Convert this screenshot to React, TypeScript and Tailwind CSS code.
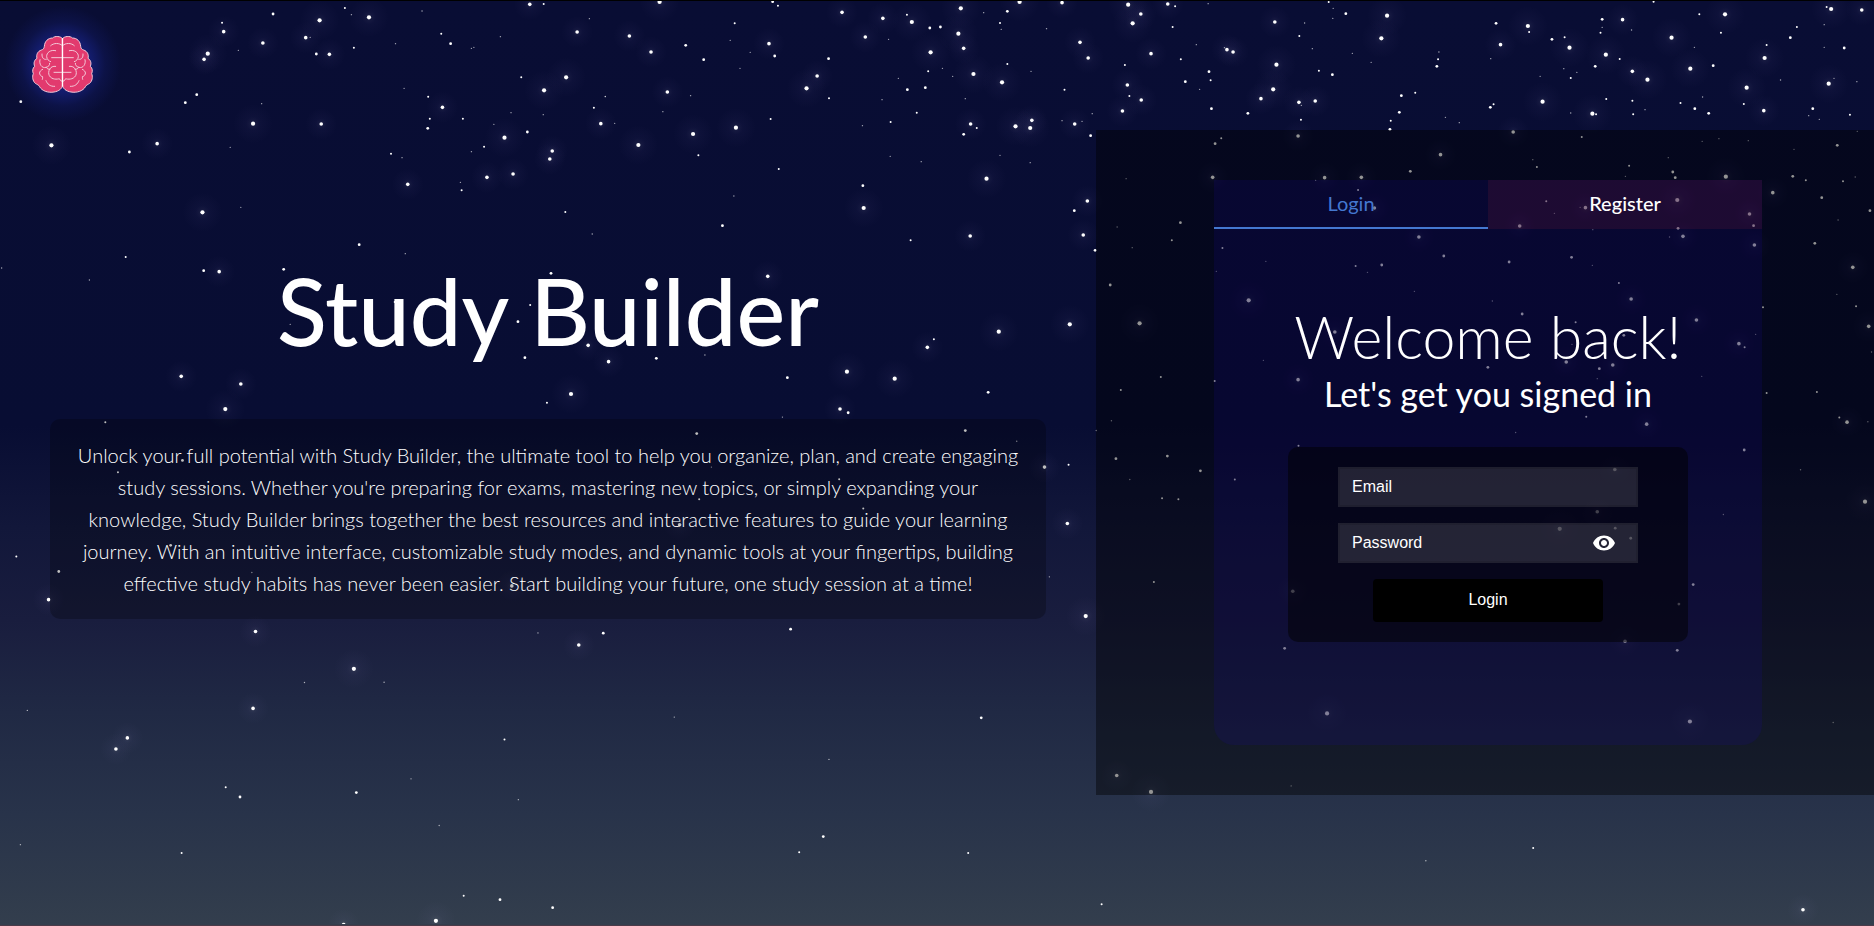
import { useState } from "react";
import { MdVisibility, MdVisibilityOff } from "react-icons/md";

/*
 * Star chart. The sky is split in six sectors; each has an origin in sky
 * units, the scale of its own grid, and a list of "x y magnitude" entries.
 * Magnitudes run from 1 (faint speck) to 5 (bright star with a halo).
 */
type Sector = { ox: number; oy: number; sx: number; sy: number; stars: string };

const SECTORS: Sector[] = [
  {
    ox: 0, oy: 0, sx: 2.45, sy: 3,
    stars:
      "669 42 3,783 61 5,845 24 2,861 44 1,904 52 5,544 68 2,548 95 4,644 129 4,749 113 4,760 112 1,867 143 2,775 162 3,807 163 4,584 151 1,509 161 5,500 178 4,482 284 3,454 308 3,641 311 1,51 305 3,620 371 5,787 372 4,126 436 5,385 431 4,317 456 3,564 442 1,496 637 5,590 622 1,880 734 3,993 761 1,308 771 2,499 812 3,537 815 4,695 808 3,4 804 1,219 840 1,444 1129 4,590 1152 4,1034 33 1,1081 101 2,1104 131 3,1155 145 1,1161 142 1,969 131 1,1226 110 1,1298 13 4,1332 12 2,1444 56 1,1414 96 4,1277 232 2,1387 232 5,1333 271 5,990 265 1,1049 290 2,1084 322 4,1053 356 2,1134 356 2,1048 385 3,1252 338 1,1331 344 1,1210 373 1,1236 413 5,1292 396 3,1186 440 2,1155 455 1,958 461 2,985 473 1,999 553 4,1128 547 1,1131 571 2,1193 532 4,1257 522 4,1353 453 4,1347 477 4,1455 323 2,1483 290 1,1385 636 2,1451 702 1,1350 820 3,967 906 2,1299 915 2,1269 965 3,711 973 1,1441 1036 4,1286 1073 3,1171 1069 1,1399 1182 5",
  },
  {
    ox: 600, oy: 0, sx: 2.45, sy: 3,
    stars:
      "146 6 5,423 5 3,436 17 2,330 70 2,72 108 4,125 156 4,210 136 3,254 179 3,319 121 1,368 157 1,343 205 1,414 131 4,428 168 3,593 37 4,560 176 3,532 228 4,506 265 5,561 295 2,165 276 4,222 287 1,13 289 1,154 335 1,2 371 4,36 370 1,333 383 5,228 402 5,94 435 5,418 357 2,241 466 2,438 507 2,328 588 1,300 677 3,411 829 4,644 557 3,646 624 5,761 721 2,907 708 4,947 536 5,787 485 1,711 469 1,643 377 1,712 366 2,776 338 2,691 299 1,753 269 3,797 263 3,731 235 1,804 214 2,839 205 1,810 157 5,864 229 1,895 296 1,915 222 5,985 247 5,891 145 4,878 101 5,834 81 3,808 84 3,764 66 5,752 44 2,693 55 4,650 111 4,707 118 1,884 25 5,940 38 1,998 34 3,1028 6 5,1132 8 4,980 69 2,983 88 1,1094 86 1,998 192 2,1056 214 1,1176 127 4,1196 174 4,1138 269 2,1018 379 5,1058 361 4,1054 384 5,1132 362 1,1163 372 4,1181 364 1,1206 341 1,1202 407 3,908 372 4,923 384 2,891 403 3,980 466 1,1054 488 1,1294 14 5,1325 42 4,1305 70 5,1391 12 4,1409 19 2,1490 11 1,1403 81 2,1350 161 4,1423 178 2,1461 134 1,1286 195 2,1292 255 4,1297 288 2,1326 300 4,1280 333 4,1434 245 3,1492 215 3,1496 241 2,1469 268 1,1498 326 3,1536 149 4,1530 143 1,1551 156 4,1194 603 4,1162 632 3,1184 705 4,1213 751 3,977 995 5,1151 973 5,818 1018 2,802 1042 4,605 1115 5,722 1136 5,459 1133 3,138 1075 3,21 1085 4,257 1065 1,951 1177 3,1522 415 2,1507 431 3,1501 532 4,1289 536 1,1422 668 3,1267 681 1,1401 721 2,1304 743 1,1525 744 2,1510 814 1,1250 855 3,1322 970 5,1374 1131 2,1276 1170 2,1506 1143 2",
  },
  {
    ox: 1234, oy: 0, sx: 2.45, sy: 3,
    stars:
      "232 6 2,274 41 3,243 25 1,242 55 1,100 66 4,173 69 1,375 47 5,160 108 2,361 115 5,192 146 1,290 160 1,502 156 1,500 178 2,497 199 3,104 194 5,208 212 2,241 224 3,336 187 1,96 268 5,66 296 4,159 307 4,165 316 1,199 303 4,34 340 3,164 359 2,410 287 3,444 278 2,405 337 3,384 362 2,382 388 3,518 352 1,552 368 1,628 322 3,636 313 2,642 70 3,720 78 5,723 96 2,653 134 4,629 176 1,779 118 3,810 112 2,822 143 5,808 206 1,750 229 1,840 217 1,825 234 2,756 305 5,825 339 1,878 341 5,887 343 2,902 58 3,952 59 4,902 82 1,898 98 2,974 90 1,911 164 5,945 177 2,885 199 3,976 214 4,1013 239 5,912 297 2,976 302 2,978 343 2,1007 329 1,1028 5 2,1072 113 5,1128 142 1,1140 43 2,1203 43 5,1193 98 2,1118 206 5,1174 197 3,1148 291 1,1094 309 2,1129 326 3,1163 340 3,1256 263 5,1249 312 2,1298 332 4,1300 174 5,1305 135 2,1363 113 3,1379 81 2,1339 240 1,1446 74 1,1452 21 2,1463 27 5,1538 30 4,1495 144 3,1457 251 5,1470 235 1,1446 142 1,1526 245 1,1418 326 3,1408 347 1,1434 358 1,1509 344 2,157 408 4,684 396 4,852 411 2,506 464 4,432 514 3,222 533 4,312 532 4,200 541 1,304 570 2,732 479 1,742 501 2,968 497 2,959 529 1,1064 473 1,1075 516 3,1081 533 3,1147 424 1,1188 416 1,1260 422 1,1205 530 5,1372 448 1,1478 436 3,1527 394 1,1369 529 3,1401 541 2,1492 544 2,1522 531 1,1320 578 4,1440 593 3,1558 632 3,1423 730 3,1480 660 1,1086 600 5,765 604 2,861 623 4,848 622 1,785 640 1,700 678 4,879 689 1,1088 685 3,1067 711 1,1100 709 4,1263 642 4,1273 677 3,1275 735 4,344 624 4,453 711 4,514 768 3,362 795 3,298 798 2,327 817 1,78 784 1,674 786 3,827 772 3,878 796 1,943 849 2,973 897 4,442 874 1,633 903 1,36 901 5,706 942 3,837 967 2,560 1006 2,247 996 4,828 1033 1,955 1006 3,1133 960 4,1278 1003 1,1237 1031 4,1251 1042 2,1296 922 2,814 1086 4,928 1095 4,895 1106 3,890 1136 1,622 1102 3,1146 1129 1,157 1139 4,72 1081 1,1516 802 4,1477 883 1,1524 919 2,1555 979 4,1562 1056 1,1305 1179 2,1428 1176 2",
  },
  {
    ox: 0, oy: 400, sx: 2.45, sy: 2.98,
    stars:
      "552 27 5,1340 8 2,258 66 2,447 180 3,289 215 2,1031 150 2,1300 175 2,501 260 3,418 433 3,40 466 2,144 511 3,119 595 4,617 514 1,1254 554 4,626 690 4,1318 694 1,1418 730 4,867 801 5,746 842 1,941 841 1,620 919 4,67 925 1,312 1007 4,284 1040 4,1236 1012 2,553 1154 2,588 1183 3,873 1170 3,1007 1129 1,1270 1191 1,1076 1268 1,50 1325 1,445 1350 2,1136 1477 2,1225 1489 3,1354 1513 3,1068 1552 5,842 1563 4",
  },
  {
    ox: 600, oy: 400, sx: 2.45, sy: 2.98,
    stars:
      "588 27 4,608 38 3,447 51 1,237 100 3,895 91 3,1021 123 1,273 200 1,243 296 2,195 372 4,586 236 2,762 268 3,645 323 2,1089 200 4,1148 193 2,1145 368 4,1101 527 1,1190 644 5,467 683 3,8 695 3,182 945 1,934 947 3,561 1071 1,547 1301 3,488 1348 2,902 1350 2,1229 1503 2,1216 91 1,1253 62 1,1264 175 3,1390 167 3,1471 211 3,1298 237 1,1377 293 2,1417 296 2,1357 542 2,1266 1119 4,1350 1168 5",
  },
  {
    ox: 1234, oy: 400, sx: 2.45, sy: 2.98,
    stars:
      "863 50 2,1011 72 4,690 97 1,158 136 2,1483 52 2,1502 66 4,1553 65 1,1250 149 3,1388 208 1,1199 341 1,1546 303 5,933 207 4,890 333 4,798 384 5,934 382 3,972 412 3,2 237 2,1125 550 3,1090 608 3,144 570 4,958 719 4,1086 746 3,124 740 3,228 934 5,1117 958 5,1468 961 1,140 1150 1,733 1335 2,470 1373 1,1394 1519 4",
  },
];

const RADIUS = [0, 0.7, 1, 1.4, 1.8, 2.1];

function Sky() {
  return (
    <svg
      aria-hidden="true"
      viewBox="0 0 1874 926"
      preserveAspectRatio="xMidYMin slice"
      className="absolute inset-x-0 -top-px h-full w-full"
    >
      <defs>
        <radialGradient id="halo">
          <stop offset="0" stopColor="#ffffff" stopOpacity="0.08" />
          <stop offset="0.35" stopColor="#b9a5ff" stopOpacity="0.03" />
          <stop offset="1" stopColor="#b9a5ff" stopOpacity="0" />
        </radialGradient>
      </defs>
      {SECTORS.flatMap((s, i) =>
        s.stars.split(",").map((entry, j) => {
          const [px, py, mag] = entry.split(" ").map(Number);
          const x = s.ox + px / s.sx;
          const y = s.oy + py / s.sy;
          return (
            <g key={`${i}-${j}`}>
              {mag > 3 && <circle cx={x} cy={y} r={mag * 4} fill="url(#halo)" />}
              <circle cx={x} cy={y} r={RADIUS[mag]} fill="#fff" opacity={mag === 1 ? 0.65 : 1} />
            </g>
          );
        }),
      )}
    </svg>
  );
}

function BrainHalf() {
  return (
    <g>
      <path
        fill="#e23a6e"
        d="M127.500 44C123 36 104 35 98 42C84 42 74 52 73 67C72 74 70 76 64 78C53 82 48 92 51 103C43 108 40 117 44 127C37 133 37 142 40 149C36 158 38 171 46 178C52 182 56 183 58 187C66 202 86 207 102 204C117 202 127 193 127.500 184Z"
      />
      <path d="M92 65C101 56 119 56 127 65M107 80C92 76 79 86 80 98C81 106 86 111 92 113M95 101H127M66 90C65 100 70 108 79 106M60 107C56 120 66 134 78 130C86 128 90 123 89 118M107 127C90 124 82 143 88 155C96 168 112 166 118 164L122 170L127 172M102 145H127M78 130C81 134 86 137 90 136M68 136C56 141 55 153 67 158M67 166C68 163 69 161 67 158M78 170C82 180 90 188 104 187" />
    </g>
  );
}

function Logo() {
  return (
    <a
      href="/"
      aria-label="Study Builder home"
      className="flex w-[126px] justify-center bg-[radial-gradient(circle_at_50%_50%,#17237c_0,#131c6c_28px,rgba(15,22,84,0.6)_42px,rgba(8,12,51,0)_58px)] py-[23px]"
    >
      <svg
        viewBox="0 0 258 240"
        className="h-20 w-[86px]"
        fill="none"
        stroke="#f3c9d8"
        strokeWidth="3"
        strokeLinecap="round"
        strokeLinejoin="round"
      >
        <BrainHalf />
        <g transform="translate(255 0) scale(-1 1)">
          <BrainHalf />
        </g>
        <path d="M127.500 44V186" stroke="#fff" strokeWidth="4" />
      </svg>
    </a>
  );
}

const fieldClass =
  "h-10 w-full border-2 border-black/10 bg-white/12 px-3 font-['Liberation_Sans',Arial,sans-serif] text-base text-white placeholder:text-white placeholder:opacity-100 focus:outline-none";

export default function App() {
  const [tab, setTab] = useState<"login" | "register">("login");
  const [show, setShow] = useState(false);
  const tabClass = (on: boolean) =>
    on
      ? "border-b-2 border-[#4478d0] text-[#4478d0]"
      : "border-b-2 border-transparent bg-[rgb(160,40,60)]/15 bg-clip-border font-medium text-white";

  return (
    <div className="relative flex min-h-screen flex-col overflow-hidden border-t border-b border-t-black border-b-[#4b3a48] bg-[linear-gradient(#090d34_0%,#080d33_46%,#12173a_57%,#191d3e_67%,#202944_77%,#28334a_88%,#333e4d_100%)] font-['Lato','Open_Sans',sans-serif] text-white">
      <Sky />
      <header className="absolute top-0 left-0">
        <Logo />
      </header>

      <main className="relative grid flex-1 grid-cols-[1096fr_778fr] items-center pb-0.5">
        <section className="px-[50px] pb-[60px] text-center">
          <h1 className="mb-[50px] pt-2 text-[92px] leading-[116px] font-medium">Study Builder</h1>
          <p className="rounded-[10px] bg-black/25 p-5 text-xl leading-8 font-light text-white">
            Unlock your full potential with Study Builder, the ultimate tool to help you organize, plan, and
            create engaging study sessions. Whether you're preparing for exams, mastering new topics, or simply
            expanding your knowledge, Study Builder brings together the best resources and interactive features
            to guide your learning journey. With an intuitive interface, customizable study modes, and dynamic
            tools at your fingertips, building effective study habits has never been easier. Start building your
            future, one study session at a time!
          </p>
        </section>

        <section className="flex justify-center bg-black/42 py-[50px] pr-[50px] pl-14">
          <div className="w-full max-w-[548px] overflow-hidden rounded-b-[20px] bg-[rgb(30,10,180)]/14">
            <div role="tablist" className="grid h-[49px] grid-cols-2 text-xl">
              <button type="button" role="tab" aria-selected={tab === "login"} onClick={() => setTab("login")} className={tabClass(tab === "login")}>
                Login
              </button>
              <button type="button" role="tab" aria-selected={tab === "register"} onClick={() => setTab("register")} className={tabClass(tab === "register")}>
                Register
              </button>
            </div>

            <div className="flex flex-col items-center px-6 pt-[72px] pb-[103px] text-center">
              <h2 className="text-[59px] leading-[72px] font-light">Welcome back!</h2>
              <h3 className="mb-8 text-[34px] leading-[42px] font-normal">Let's get you signed in</h3>
              <form
                onSubmit={(e) => e.preventDefault()}
                className="flex w-full max-w-[400px] flex-col items-center rounded-[10px] bg-black/50 px-[50px] py-5"
              >
                <div className="flex w-full flex-col gap-4">
                  <input type="email" aria-label="Email" placeholder="Email" className={fieldClass} />
                  <div className="relative">
                    <input type={show ? "text" : "password"} aria-label="Password" placeholder="Password" className={fieldClass} />
                    <button
                      type="button"
                      aria-label={show ? "Hide password" : "Show password"}
                      onClick={() => setShow(!show)}
                      className="absolute inset-y-0 right-[22px] flex items-center"
                    >
                      {show ? <MdVisibilityOff className="size-6" /> : <MdVisibility className="size-6" />}
                    </button>
                  </div>
                </div>
                <button
                  type="submit"
                  className="mt-4 h-[43px] w-[230px] rounded bg-black font-['Liberation_Sans',Arial,sans-serif] text-base text-white"
                >
                  Login
                </button>
              </form>
            </div>
          </div>
        </section>
      </main>
    </div>
  );
}
